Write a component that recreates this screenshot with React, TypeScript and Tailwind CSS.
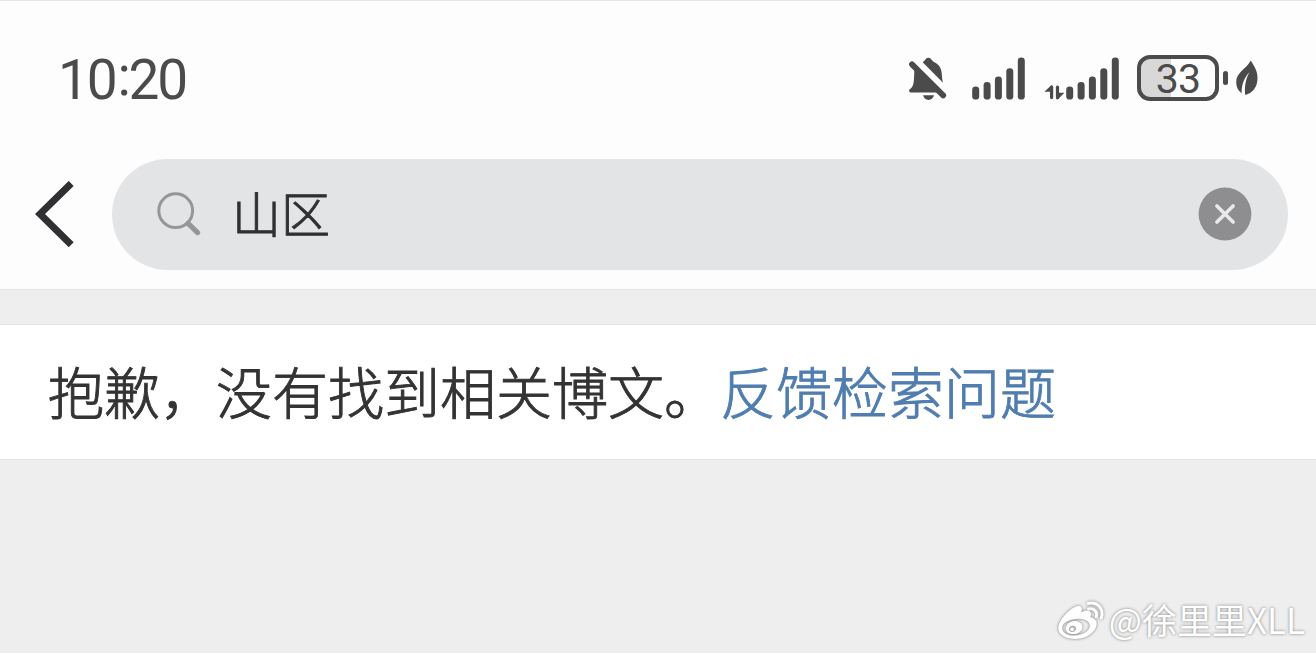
type SignalProps = {
  hasTraffic?: boolean;
};

const signalBars = [
  { id: 1, x: 3.7, top: 32.5 },
  { id: 2, x: 15.1, top: 27.9 },
  { id: 3, x: 26.4, top: 22.6 },
  { id: 4, x: 37.8, top: 14.3 },
  { id: 5, x: 49.3, top: 3.6 },
];

function BellOffIcon() {
  return (
    <svg width="45" height="50" viewBox="0 0 45 50" fill="#4b4b4b">
      <path d="M16.7 10.2C18.4 9.4 19 7.8 20.2 6.6C21.5 5.4 23.3 5.4 24.6 6.6C25.8 7.8 26.2 9.2 28 9.9C33 12.2 35.2 16 35.7 21C36 25 36.2 28 37 30.8Z" />
      <path d="M9.3 15.5L34 40.6H5.8C2.6 40.6 2.4 38 4.4 36.8C6.8 35.2 7.6 32 7.9 28C8.2 24 8.3 19 8.5 13.5Z" />
      <path
        d="M6 12.4L37.2 43.4"
        stroke="#4b4b4b"
        strokeWidth="5.8"
        strokeLinecap="round"
      />
      <path d="M17 43.2H28C27.2 46 25 47.9 22.5 47.9S17.8 46 17 43.2Z" />
    </svg>
  );
}

function SignalIcon({ hasTraffic }: SignalProps) {
  return (
    <div className="flex items-end">
      {hasTraffic && (
        <svg width="22" height="46" viewBox="0 0 22 46" fill="#4b4b4b">
          <path d="M8.5 31.6V37.8H.4L7 31.6Z" />
          <path d="M12.5 45.2V38.8H20.4L14 45.2Z" />
          <path
            d="M7.6 33V43.6M13.5 33V43.6"
            stroke="#4b4b4b"
            strokeWidth="3.2"
            strokeLinecap="round"
          />
        </svg>
      )}
      <svg width="53" height="46" viewBox="0 0 53 46" fill="#4b4b4b">
        {signalBars.map(bar => (
          <rect
            key={bar.id}
            x={bar.x - 3.5}
            y={bar.top}
            width="7"
            height={45.6 - bar.top}
            rx="3.4"
          />
        ))}
      </svg>
    </div>
  );
}

function Battery() {
  return (
    <div className="flex items-center">
      <div className="flex h-[46px] w-[82px] items-center justify-center rounded-[13px] border-4 border-[#4b4b4b] bg-linear-to-r from-[#d8d8d8] from-41% to-transparent to-41% pt-0.5 font-['Roboto','Liberation_Sans',sans-serif] text-[41px] leading-none tracking-[-0.8px] text-[#4b4b4b]">
        33
      </div>
      <div className="ml-1 h-[14px] w-[5px] rounded-full bg-[#4b4b4b]" />
      <svg
        className="ml-2"
        width="22"
        height="36"
        viewBox="0 0 22 36"
        fill="#4b4b4b"
      >
        <path d="M14.8.6C17.4 5.4 21.5 10 21.5 18C21.5 27 17 32.8 9.2 35.1C8.3 26 9.8 18.8 13.4 12.2C8.4 17.6 5.6 24 5.6 33.2C2 30.6.2 26.6.2 22.2C.2 12 10.2 9.6 14.8.6Z" />
      </svg>
    </div>
  );
}

function StatusBar() {
  return (
    <div className="flex h-[158px] items-start justify-between pt-[51px] pr-[58px] pl-[58px]">
      <span className="mt-[3px] flex font-['Roboto','Liberation_Sans',sans-serif] text-[55px] leading-[50px] tracking-[-2.2px] text-[#4b4b4b]">
        10<span className="-mt-1 ml-0.5">:</span>20
      </span>
      <div className="flex items-center">
        <BellOffIcon />
        <div className="ml-[21px]">
          <SignalIcon />
        </div>
        <div className="ml-[19px]">
          <SignalIcon hasTraffic />
        </div>
        <div className="ml-[18px] pt-0.5">
          <Battery />
        </div>
      </div>
    </div>
  );
}

function SearchBar() {
  return (
    <div className="flex h-[111px] items-center pr-7 pl-[34px]">
      <button aria-label="返回">
        <svg width="42" height="68" viewBox="0 0 42 68" fill="none">
          <path d="M37.2 2.4L6 33L37.2 63.8" stroke="#303032" strokeWidth="7" />
        </svg>
      </button>
      <div className="ml-9 flex h-full flex-1 items-center rounded-full bg-[#e3e4e6] pr-[36px] pb-px pl-[44px]">
        <svg width="46" height="46" viewBox="0 0 46 46" fill="none" stroke="#969698">
          <circle cx="19.7" cy="19.7" r="16.9" strokeWidth="3" />
          <path d="M32 32.4L41.6 41.6" strokeWidth="5.2" strokeLinecap="round" />
        </svg>
        <span className="ml-[30px] flex-1 pb-1 font-['Noto_Sans_CJK_SC',sans-serif] text-[49px] leading-[60px] font-light text-[#303032] [-webkit-text-stroke:0.9px]">
          山区
        </span>
        <button aria-label="清除">
          <svg width="54" height="54" viewBox="0 0 54 54" fill="none">
            <circle cx="27" cy="27" r="26.4" fill="#8e8e91" />
            <path
              d="M18.9 18.9L35.1 35.1M35.1 18.9L18.9 35.1"
              stroke="#e9e9eb"
              strokeWidth="3.6"
              strokeLinecap="round"
            />
          </svg>
        </button>
      </div>
    </div>
  );
}

function WeiboLogo() {
  return (
    <svg
      className="overflow-visible drop-shadow-[0_0_1.5px_rgba(0,0,0,0.5)]"
      width="50"
      height="42"
      viewBox="0 0 50 42"
      fill="none"
    >
      <path
        fillRule="evenodd"
        d="M2.3 27.7C2.6 22.6 6.6 16.9 11 12.7C15.8 8.1 21.3 5.2 24 6.2C26.1 7 26.3 9.2 25.3 12C28.8 10.4 32.6 9.6 34.2 11.5C35.3 12.8 35.1 14.8 34.4 17.2C38.2 18 40.9 20.3 40.7 24.1C40.3 31.6 31 39 19.5 39C9.9 39 2 34.6 2.3 27.7ZM6.2 28.4C6.7 33.1 12.6 36.2 19.6 35.5C28 34.7 34.2 30 33.8 25.2C33.3 20.3 26.7 18 19 19C11.4 20 5.7 23.7 6.2 28.4Z"
        fill="white"
      />
      <path
        fillRule="evenodd"
        d="M10.4 25.9C12 22.1 16.7 20.4 21 21.3C25.3 22.2 27.6 25.7 25.8 29.4C23.9 33.1 18.9 34.9 14.6 33.8C10.3 32.6 8.8 29.4 10.4 25.9ZM13.6 27.4C12.6 29.1 13.1 31 14.8 31.7C16.5 32.3 18.7 31.6 19.6 30C20.5 28.3 19.9 26.5 18.2 25.9C16.5 25.2 14.6 25.9 13.6 27.4Z"
        fill="white"
      />
      <circle cx="16" cy="29.4" r="1.8" fill="white" />
      <path
        d="M32.6 8.9C38.2 7.6 42 12.2 40.2 16.8M32.2 3.4C41.7 1.2 48.4 9.2 45.2 18"
        stroke="white"
        strokeWidth="3"
        strokeLinecap="round"
      />
    </svg>
  );
}

function Watermark() {
  return (
    <div className="flex items-center justify-end pr-[11px] text-white">
      <WeiboLogo />
      <span className="ml-[3px] pb-1 font-['Noto_Sans_CJK_SC',sans-serif] text-[35px] leading-[44px] whitespace-nowrap [text-shadow:0_0_3px_rgba(0,0,0,0.5)]">
        @徐里里XLL
      </span>
    </div>
  );
}

function App() {
  return (
    <div className="flex h-[653px] w-[1316px] flex-col overflow-hidden bg-[#eeeeee]">
      <header className="h-[290px] border-y border-[#e4e4e4] bg-[#fdfdfd]">
        <StatusBar />
        <SearchBar />
      </header>

      <main className="mt-[34px] flex h-[136px] items-center border-y border-[#e4e4e4] bg-white pb-1 pl-12">
        <p className="font-['Noto_Sans_CJK_SC',sans-serif] text-[56px] leading-[80px] font-light whitespace-nowrap text-[#333333] [-webkit-text-stroke:0.9px]">
          抱歉，没有找到相关博文。
          <a className="text-[#507daf]">反馈检索问题</a>
        </p>
      </main>

      <footer className="mt-auto pb-[8px]">
        <Watermark />
      </footer>
    </div>
  );
}

export default App;
